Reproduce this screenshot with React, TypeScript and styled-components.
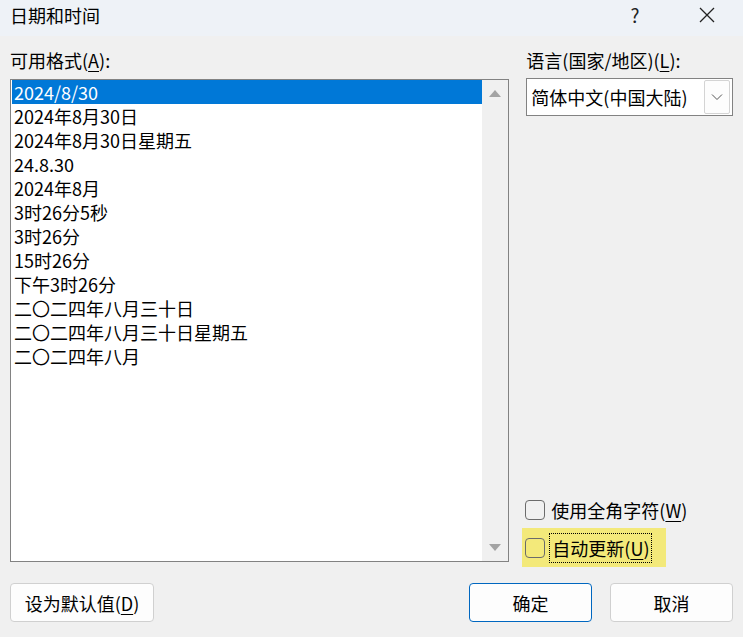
import React from 'react';
import styled, { createGlobalStyle } from 'styled-components';

const GlobalStyle = createGlobalStyle`
  html, body {
    margin: 0;
    padding: 0;
    background: #f0f0f0;
  }
  body {
    font-family: "Noto Sans CJK SC", "Noto Sans", "Liberation Sans", sans-serif;
    color: #000;
  }
`;

const formats = [
  '2024/8/30',
  '2024年8月30日',
  '2024年8月30日星期五',
  '24.8.30',
  '2024年8月',
  '3时26分5秒',
  '3时26分',
  '15时26分',
  '下午3时26分',
  '二〇二四年八月三十日',
  '二〇二四年八月三十日星期五',
  '二〇二四年八月',
];

const Dialog = styled.div`
  width: 743px;
  height: 637px;
  display: flex;
  flex-direction: column;
  background: #f0f0f0;
  overflow: hidden;
`;

const TitleBar = styled.div`
  height: 36px;
  flex: none;
  display: flex;
  align-items: center;
  background: #eef2f7;
  padding: 0 0 7px 10px;
  font-size: 18px;
  box-sizing: border-box;
`;

const TitleText = styled.div`
  flex: 1;
`;

const TitleButton = styled.div`
  width: 72px;
  display: flex;
  justify-content: center;
  align-items: center;
  font-size: 19px;
  color: #222;
`;

const Body = styled.div`
  flex: 1;
  display: flex;
  flex-direction: column;
  padding: 0 10px 15px 10px;
`;

const Columns = styled.div`
  display: flex;
  gap: 17px;
`;

const LeftColumn = styled.div`
  width: 500px;
  display: flex;
  flex-direction: column;
`;

const RightColumn = styled.div`
  width: 207px;
  display: flex;
  flex-direction: column;
`;

const Label = styled.div`
  height: 43px;
  box-sizing: border-box;
  padding-top: 12px;
  font-size: 18px;
  line-height: 24px;
`;

const Key = styled.span`
  text-decoration: underline;
  text-underline-offset: 3px;
`;

const ListBox = styled.div`
  height: 483px;
  box-sizing: border-box;
  border: 1px solid #828282;
  background: #fff;
  display: flex;
  padding-left: 1px;
`;

const Items = styled.div`
  flex: 1;
  display: flex;
  flex-direction: column;
`;

const Item = styled.div<{ $selected?: boolean }>`
  height: 24px;
  line-height: 24px;
  font-size: 18px;
  padding-left: 2px;
  white-space: nowrap;
  background: ${(p) => (p.$selected ? '#0078d7' : 'transparent')};
  color: ${(p) => (p.$selected ? '#fff' : '#000')};
`;

const ScrollBar = styled.div`
  width: 26px;
  background: #f0f0f0;
  display: flex;
  flex-direction: column;
  justify-content: space-between;
  align-items: center;
  padding: 10px 0 10px;
`;

const Arrow = styled.div<{ $down?: boolean }>`
  width: 0;
  height: 0;
  border-left: 6px solid transparent;
  border-right: 6px solid transparent;
  ${(p) =>
    p.$down
      ? 'border-top: 7px solid #a3a3a3;'
      : 'border-bottom: 7px solid #a3a3a3;'}
`;

const Combo = styled.div`
  height: 38px;
  box-sizing: border-box;
  margin-top: -1px;
  border: 1px solid #828282;
  background: #fff;
  display: flex;
  align-items: center;
  padding: 1px 2px 1px 4px;
  font-size: 18px;
`;

const ComboText = styled.div`
  flex: 1;
`;

const DropButton = styled.div`
  width: 26px;
  height: 34px;
  box-sizing: border-box;
  border: 1px solid #d4d4d4;
  border-radius: 2px;
  background: #fdfdfd;
  display: flex;
  align-items: center;
  justify-content: center;
`;

const Spacer = styled.div`
  flex: 1;
`;

const CheckRow = styled.div<{ $highlight?: boolean }>`
  display: flex;
  align-items: center;
  gap: 6px;
  height: ${(p) => (p.$highlight ? 39 : 36)}px;
  width: 144px;
  margin-left: -4px;
  margin-bottom: ${(p) => (p.$highlight ? -5 : 0)}px;
  padding-left: 3px;
  box-sizing: border-box;
  font-size: 18px;
  white-space: nowrap;
  background: ${(p) => (p.$highlight ? '#f3e97a' : 'transparent')};
`;

const Box = styled.div`
  width: 20px;
  height: 20px;
  flex: none;
  box-sizing: border-box;
  border: 1.5px solid #6b6b6b;
  border-radius: 4px;
  background: transparent;
`;

const FocusText = styled.span<{ $focus?: boolean }>`
  padding: 1px 2px;
  margin-left: -2px;
  border: 1px dotted ${(p) => (p.$focus ? '#000' : 'transparent')};
`;

const Footer = styled.div`
  margin-top: 21px;
  display: flex;
  gap: 18px;
`;

const Button = styled.div<{ $primary?: boolean; $width: number }>`
  width: ${(p) => p.$width}px;
  height: 39px;
  box-sizing: border-box;
  border: 1px solid ${(p) => (p.$primary ? '#0067c0' : '#d0d0d0')};
  border-radius: 4px;
  background: #fdfdfd;
  display: flex;
  align-items: center;
  justify-content: center;
  font-size: 18px;
`;

const FooterSpacer = styled.div`
  flex: 1;
`;

export default function App() {
  return (
    <>
      <GlobalStyle />
      <Dialog>
        <TitleBar>
          <TitleText>日期和时间</TitleText>
          <TitleButton>?</TitleButton>
          <TitleButton>
            <svg width="16" height="16" viewBox="0 0 16 16">
              <path d="M1 1 L15 15 M15 1 L1 15" stroke="#222" strokeWidth="1.3" />
            </svg>
          </TitleButton>
        </TitleBar>
        <Body>
          <Columns>
            <LeftColumn>
              <Label>
                可用格式(<Key>A</Key>):
              </Label>
              <ListBox>
                <Items>
                  {formats.map((f, i) => (
                    <Item key={f} $selected={i === 0}>
                      {f}
                    </Item>
                  ))}
                </Items>
                <ScrollBar>
                  <Arrow />
                  <Arrow $down />
                </ScrollBar>
              </ListBox>
            </LeftColumn>
            <RightColumn>
              <Label>
                语言(国家/地区)(<Key>L</Key>):
              </Label>
              <Combo>
                <ComboText>简体中文(中国大陆)</ComboText>
                <DropButton>
                  <svg width="12" height="8" viewBox="0 0 12 8">
                    <path d="M1 1.5 L6 6.5 L11 1.5" fill="none" stroke="#555" strokeWidth="1" />
                  </svg>
                </DropButton>
              </Combo>
              <Spacer />
              <CheckRow>
                <Box />
                <span>
                  使用全角字符(<Key>W</Key>)
                </span>
              </CheckRow>
              <CheckRow $highlight>
                <Box />
                <FocusText $focus>
                  自动更新(<Key>U</Key>)
                </FocusText>
              </CheckRow>
            </RightColumn>
          </Columns>
          <Footer>
            <Button $width={144}>
              设为默认值(<Key>D</Key>)
            </Button>
            <FooterSpacer />
            <Button $width={123} $primary>
              确定
            </Button>
            <Button $width={123}>取消</Button>
          </Footer>
        </Body>
      </Dialog>
    </>
  );
}
